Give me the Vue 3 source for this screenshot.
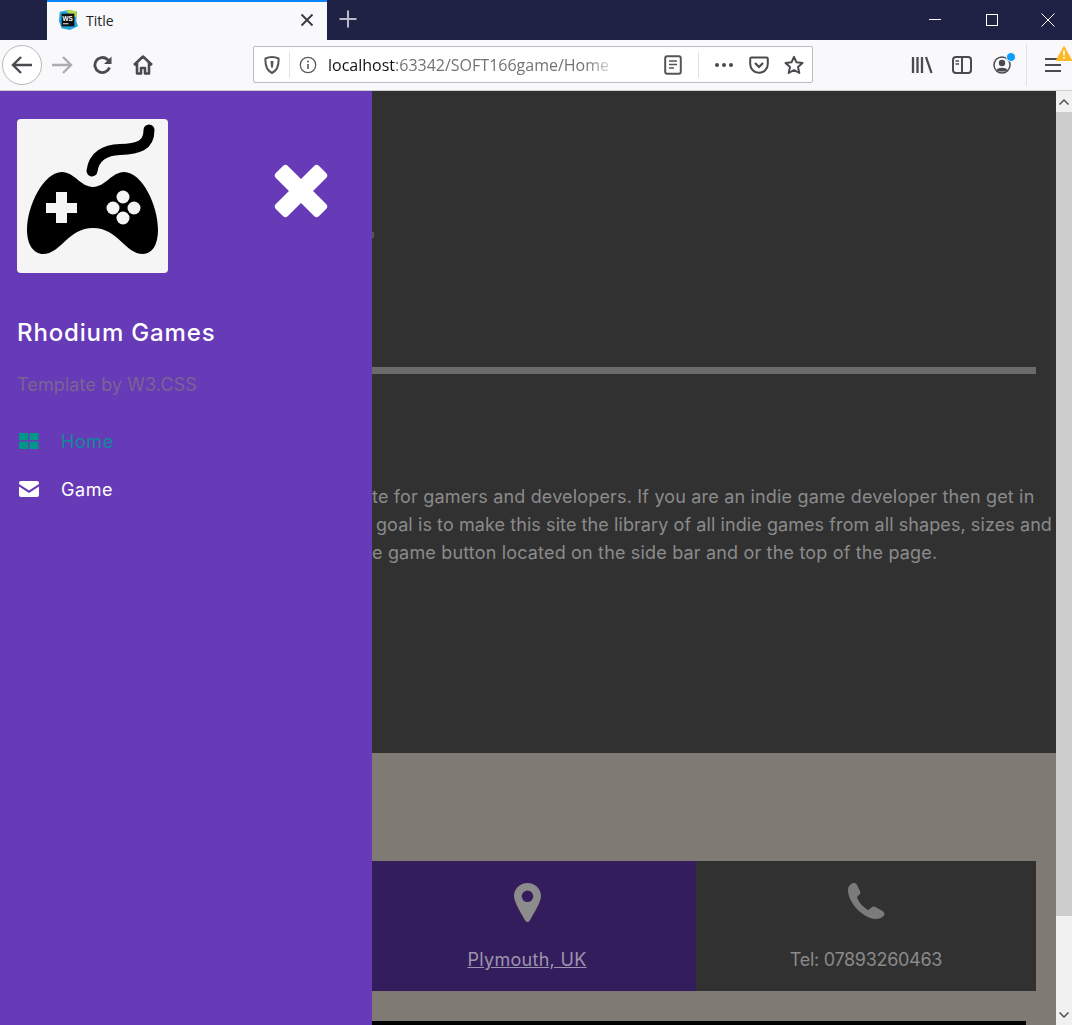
<script setup>
const lines = [
  { cls: "l1", text: "te for gamers and developers. If you are an indie game developer then get in" },
  { cls: "l2", text: "goal is to make this site the library of all indie games from all shapes, sizes and" },
  { cls: "l3", text: "e game button located on the side bar and or the top of the page." },
];
</script>

<template>
  <div class="window">
    <div class="tabbar">
      <div class="tab">
        <svg class="ws" width="20" height="20" viewBox="0 0 22 22">
          <path d="M2 2 L12 0 L21 2 L20 12 L22 18 L13 22 L4 20 L1 12 Z" fill="#1fa8e0" />
          <path d="M8 0 L20 1 L21 8 L14 6 Z" fill="#b6d94c" />
          <rect x="4" y="4" width="14" height="14" fill="#111" />
          <text x="5" y="12" class="ws-text">WS</text>
          <rect x="5.5" y="14.5" width="6" height="1.2" fill="#ddd" />
        </svg>
        <span class="tab-title">Title</span>
        <svg class="tab-close" width="14" height="14" viewBox="0 0 14 14">
          <path d="M1.5 1.5 L12.5 12.5 M12.5 1.5 L1.5 12.5" stroke="#3a3a3f" stroke-width="1.9" />
        </svg>
      </div>
      <svg class="newtab" width="18" height="18" viewBox="0 0 18 18">
        <path d="M9 0.5 V17.5 M0.5 9 H17.5" stroke="#b9bbc9" stroke-width="2" />
      </svg>
      <div class="winctrls">
        <svg width="14" height="14" viewBox="0 0 14 14"><path d="M1 6.500 H13" stroke="#fff" stroke-width="1" /></svg>
        <svg width="14" height="14" viewBox="0 0 14 14"><rect x="1.5" y="1.5" width="11" height="11" fill="none" stroke="#fff" stroke-width="1" /></svg>
        <svg width="14" height="14" viewBox="0 0 14 14"><path d="M0.5 0.5 L13.5 13.5 M13.5 0.5 L0.5 13.5" stroke="#fff" stroke-width="1" /></svg>
      </div>
    </div>

    <div class="toolbar">
      <div class="navbtn back">
        <svg width="22" height="20" viewBox="0 0 22 20"><path d="M21 10 H2 M10 2 L2 10 L10 18" fill="none" stroke="#4a4a4f" stroke-width="2.4" /></svg>
      </div>
      <div class="navbtn">
        <svg width="22" height="20" viewBox="0 0 22 20"><path d="M1 10 H20 M12 2 L20 10 L12 18" fill="none" stroke="#adadb0" stroke-width="2.4" /></svg>
      </div>
      <div class="navbtn reload">
        <svg width="20" height="20" viewBox="0 0 20 20"><path d="M16.5 12.5 A7.5 7.5 0 1 1 14.5 4.5 L17 7" fill="none" stroke="#4a4a4f" stroke-width="2.8" /><path d="M18.5 1.5 V9 H11 Z" fill="#4a4a4f" /></svg>
      </div>
      <div class="navbtn">
        <svg width="20" height="20" viewBox="0 0 20 20"><path d="M1 10 L10 1.5 L19 10 M4 8 V18.5 H8 V13 H12 V18.5 H16 V8" fill="none" stroke="#4a4a4f" stroke-width="2.6" stroke-linejoin="round" /></svg>
      </div>

      <div class="urlbar">
        <svg class="shield" width="16" height="18" viewBox="0 0 16 18"><path d="M8 1 C10 1 12.5 1.5 14.5 2.5 C15 9 13 14.5 8 17 C3 14.5 1 9 1.500 2.500 C3.500 1.500 6 1 8 1 Z" fill="none" stroke="#55555a" stroke-width="2" /><path d="M6.500 5 H9.500 L9 11.500 H7 Z" fill="#55555a" /></svg>
        <span class="urlsep first"></span>
        <svg class="info" width="18" height="18" viewBox="0 0 18 18"><circle cx="9" cy="9" r="7.700" fill="none" stroke="#5a5a5f" stroke-width="1.300" /><path d="M9 8 V13" stroke="#5a5a5f" stroke-width="1.600" /><circle cx="9" cy="5.500" r="1" fill="#5a5a5f" /></svg>
        <span class="urltext"><span class="host">localhost</span>:63342/SOFT166game/Home</span>
        <svg class="reader" width="18" height="20" viewBox="0 0 18 20"><rect x="1.200" y="1.200" width="15.600" height="17.600" rx="2" fill="none" stroke="#55555a" stroke-width="2" /><path d="M5 6 H13 M5 9.500 H13 M5 13 H10" stroke="#55555a" stroke-width="1.500" /></svg>
        <span class="urlsep second"></span>
        <svg class="dots" width="20" height="6" viewBox="0 0 20 6"><circle cx="3" cy="3" r="2" fill="#4a4a4f" /><circle cx="10" cy="3" r="2" fill="#4a4a4f" /><circle cx="17" cy="3" r="2" fill="#4a4a4f" /></svg>
        <svg class="pocket" width="20" height="18" viewBox="0 0 20 18"><path d="M2.500 1.500 H17.500 A1.300 1.300 0 0 1 18.800 2.800 V8 A8.800 8.800 0 0 1 1.200 8 V2.800 A1.300 1.300 0 0 1 2.500 1.500 Z" fill="none" stroke="#4a4a4f" stroke-width="2" /><path d="M6 7 L10 11 L14 7" fill="none" stroke="#4a4a4f" stroke-width="2.200" /></svg>
        <svg class="star" width="20" height="20" viewBox="0 0 20 20"><path d="M10 1.800 L12.500 7.300 L18.500 8 L14 12 L15.300 18 L10 15 L4.700 18 L6 12 L1.500 8 L7.500 7.300 Z" fill="none" stroke="#4a4a4f" stroke-width="2" stroke-linejoin="round" /></svg>
      </div>

      <div class="tools">
        <svg width="22" height="20" viewBox="0 0 22 20"><path d="M2 2 V18 M6.500 2 V18 M11 2 V18 M15 2 L20.500 18" stroke="#4a4a4f" stroke-width="2.300" /></svg>
        <svg width="20" height="18" viewBox="0 0 20 18"><rect x="1" y="1" width="18" height="16" rx="3" fill="none" stroke="#4a4a4f" stroke-width="2" /><rect x="9" y="1" width="2" height="16" fill="#4a4a4f" /><path d="M3.500 5 H7 M3.500 8 H7" stroke="#4a4a4f" stroke-width="1.500" /></svg>
        <div class="account">
          <svg width="18" height="18" viewBox="0 0 18 18"><circle cx="9" cy="9" r="8" fill="none" stroke="#4a4a4f" stroke-width="1.500" /><circle cx="9" cy="7" r="3.200" fill="#4a4a4f" /><path d="M3.500 14 C5 11 13 11 14.500 14 C12 16 6 16 3.500 14 Z" fill="#4a4a4f" /></svg>
          <span class="badge-dot"></span>
        </div>
      </div>
      <span class="toolsep"></span>
      <div class="menu">
        <span></span><span></span><span></span>
        <svg class="warn" width="16" height="15" viewBox="0 0 16 15"><path d="M8 0.500 L15.800 14.500 H0.200 Z" fill="#fdb827" stroke="#fdb827" stroke-linejoin="round" /><path d="M8 4.500 V9.500 M8 11 V12.800" stroke="#fff" stroke-width="1.600" /></svg>
      </div>
    </div>

    <div class="page">
      <aside class="sidebar">
        <div class="side-top">
          <div class="logo">
            <svg width="151" height="154" viewBox="17 119 151 154">
              <path d="M92 171 C94 156 105 150 120 149.500 C138 149 149 146 149 130" fill="none" stroke="#000" stroke-width="11" stroke-linecap="round" />
              <path d="M62 172 C74 172 81 187 93 187 C105 187 112 172 124 172 C142 172 158 205 158 230 C158 245 152 254 143 254 C125 254 118 228 93 228 C68 228 61 254 43 254 C34 254 27 245 27 230 C27 205 44 172 62 172 Z" fill="#000" />
              <path d="M56 192 H67 V203 H77 V213 H67 V223 H56 V213 H46 V203 H56 Z" fill="#f6f5f6" />
              <circle cx="123" cy="197" r="6.500" fill="#f6f5f6" />
              <circle cx="123" cy="218" r="6.500" fill="#f6f5f6" />
              <circle cx="113" cy="208" r="6.500" fill="#f6f5f6" />
              <circle cx="134" cy="208" r="6.500" fill="#f6f5f6" />
            </svg>
          </div>
          <svg class="close" width="56" height="56" viewBox="0 0 56 56">
            <rect x="-2.500" y="19.500" width="61" height="17" rx="3.500" fill="#fff" transform="rotate(45 28 28)" />
            <rect x="-2.500" y="19.500" width="61" height="17" rx="3.500" fill="#fff" transform="rotate(-45 28 28)" />
          </svg>
        </div>
        <h4 class="brand">Rhodium Games</h4>
        <p class="byline">Template by W3.CSS</p>
        <nav class="sidenav">
          <a class="navlink active">
            <svg width="20" height="16" viewBox="0 0 20 16"><path d="M0 0 H9 V7 H0 Z M10.500 0 H19.500 V7 H10.500 Z M0 8.500 H9 V16 H0 Z M10.500 8.500 H19.500 V16 H10.500 Z" fill="#009688" /></svg>
            <span>Home</span>
          </a>
          <a class="navlink">
            <svg width="20" height="16" viewBox="0 0 20 16"><path d="M2 0 H18 A2 2 0 0 1 20 2 V3 L10 9.500 L0 3 V2 A2 2 0 0 1 2 0 Z M0 5.500 L10 12 L20 5.500 V14 A2 2 0 0 1 18 16 H2 A2 2 0 0 1 0 14 Z" fill="#fff" /></svg>
            <span>Game</span>
          </a>
        </nav>
      </aside>

      <main class="content">
        <section class="dark">
          <span class="clip-mark"></span>
          <div class="rule"></div>
          <div class="about">
            <div v-for="line in lines" :key="line.cls" class="about-line" :class="line.cls">{{ line.text }}</div>
          </div>
        </section>
        <section class="contact">
          <div class="cards">
            <div class="card purple">
              <svg width="27" height="39" viewBox="0 0 27 39"><path fill-rule="evenodd" d="M13.500 0 C21 0 27 5.800 27 13 C27 19 20 30 15.500 38 C14.500 39.300 12.500 39.300 11.500 38 C7 30 0 19 0 13 C0 5.800 6 0 13.500 0 Z M13.500 7.500 A5.800 5.800 0 1 0 13.500 19.100 A5.800 5.800 0 1 0 13.500 7.500 Z" fill="#8c8c8c" />
              </svg>
              <a class="place">Plymouth, UK</a>
            </div>
            <div class="card slate">
              <svg width="37" height="36" viewBox="0 0 37 36"><path d="M4 0.500 C6 -0.500 8 0 9 2 L12 8 C12.800 9.800 12.300 11 11 12 L9 14 C10.500 19 15 24.500 20.500 27 L23.500 24.500 C25 23.300 26.500 23.300 28 24.200 L34.500 28 C36.500 29.300 37 31 36 32.500 C34 35 31 36 27.500 36 C14 35 0 19 0 7 C0 4 1.500 1.800 4 0.500 Z" fill="#7b7b7b" /></svg>
              <span class="tel">Tel: 07893260463</span>
            </div>
          </div>
          <div class="blackbar"></div>
        </section>
      </main>

      <div class="scrollbar">
        <div class="sb-arrow">
          <svg width="10" height="6" viewBox="0 0 10 6"><path d="M0.500 5.500 L5 1 L9.500 5.500" fill="none" stroke="#505050" stroke-width="1.500" /></svg>
        </div>
        <div class="sb-thumb"></div>
        <div class="sb-track"></div>
        <div class="sb-arrow low">
          <svg width="10" height="6" viewBox="0 0 10 6"><path d="M0.500 0.500 L5 5 L9.500 0.500" fill="none" stroke="#505050" stroke-width="1.500" /></svg>
        </div>
      </div>
    </div>
  </div>
</template>

<style>
html, body {
  margin: 0;
  overflow: hidden;
}
</style>

<style scoped>
.window {
  width: 1072px;
  height: 1025px;
  overflow: hidden;
  display: flex;
  flex-direction: column;
  font-family: "Inter", "Open Sans", sans-serif;
}

.tabbar {
  height: 40px;
  flex: none;
  background: #1f2244;
  display: flex;
  align-items: stretch;
  padding-left: 47px;
}
.tab {
  width: 280px;
  background: #f9f9fb;
  border-top: 2px solid #0a84ff;
  box-sizing: border-box;
  display: flex;
  align-items: center;
  padding: 0 13px 2px 11px;
  font-family: "Open Sans", sans-serif;
  font-size: 14px;
  color: #222;
}
.ws { flex: none; }
.ws-text {
  font-family: "Liberation Sans", sans-serif;
  font-size: 7px;
  font-weight: 700;
  fill: #fff;
}
.tab-title { margin-left: 8px; flex: 1; }
.newtab { margin: 10px 0 0 12px; }
.winctrls {
  margin-left: auto;
  width: 168px;
  display: flex;
  justify-content: space-between;
  align-items: center;
  padding: 0 17px 0 24px;
  box-sizing: border-box;
}

.toolbar {
  height: 51px;
  flex: none;
  box-sizing: border-box;
  background: #f9f9fb;
  border-bottom: 1px solid #cfcfd3;
  display: flex;
  align-items: center;
  padding: 0 0 1px 2px;
}
.navbtn {
  width: 40px;
  height: 40px;
  flex: none;
  display: flex;
  align-items: center;
  justify-content: center;
  box-sizing: border-box;
}
.navbtn.reload { margin-left: 1px; }
.navbtn.back {
  border: 1px solid #b8b8bc;
  border-radius: 50%;
  background: #fff;
}
.urlbar {
  margin-left: 90px;
  width: 560px;
  height: 37px;
  flex: none;
  box-sizing: border-box;
  border: 1px solid #bcbcc0;
  border-radius: 2px;
  background: #fff;
  display: flex;
  align-items: center;
  padding-left: 10px;
}
.urlsep {
  width: 1px;
  height: 26px;
  background: #e2e2e4;
  flex: none;
}
.urlsep.first { margin-left: 9px; }
.urlsep.second { margin-left: 16px; }
.info { margin-left: 9px; }
.urltext {
  margin-left: 11px;
  width: 292px;
  flex: none;
  white-space: nowrap;
  overflow: hidden;
  font-family: "Open Sans", sans-serif;
  font-size: 16px;
  color: #737373;
  -webkit-mask-image: linear-gradient(to right, #000 88%, transparent 100%);
  mask-image: linear-gradient(to right, #000 88%, transparent 100%);
}
.host { color: #111; }
.reader { margin-left: 44px; }
.dots { margin-left: 15px; }
.pocket { margin-left: 15px; }
.star { margin-left: 15px; }

.tools {
  margin-left: 98px;
  display: flex;
  align-items: center;
  gap: 19px;
}
.account { position: relative; display: flex; margin-left: 2px; }
.badge-dot {
  position: absolute;
  top: -4px;
  right: -5px;
  width: 8px;
  height: 8px;
  border-radius: 50%;
  background: #0a9dff;
  border: 1px solid #f9f9fb;
}
.toolsep {
  width: 1px;
  height: 42px;
  background: #e0e0e3;
  margin-left: 15px;
}
.menu {
  position: relative;
  margin-left: 18px;
  width: 16px;
  display: flex;
  flex-direction: column;
  gap: 4px;
}
.menu span {
  height: 2px;
  background: #4a4a4f;
}
.warn {
  position: absolute;
  top: -12px;
  left: 11px;
}

.page {
  flex: 1;
  min-height: 0;
  display: flex;
}

.sidebar {
  width: 372px;
  flex: none;
  background: #673ab7;
  box-sizing: border-box;
  padding: 28px 0 0 17px;
  color: #fff;
}
.side-top {
  display: flex;
  align-items: flex-start;
}
.logo {
  width: 151px;
  height: 154px;
  background: #f6f5f6;
  border-radius: 4px;
  flex: none;
  display: flex;
}
.close {
  margin: 44px 0 0 105px;
}
.brand {
  margin: 45px 0 0;
  font-size: 24px;
  line-height: 30px;
  font-weight: 500;
  letter-spacing: 0.85px;
}
.byline {
  margin: 24px 0 0;
  font-size: 18px;
  line-height: 26px;
  color: #7a6494;
  letter-spacing: 0.1px;
}
.sidenav {
  margin-top: 29px;
  display: flex;
  flex-direction: column;
  gap: 20px;
}
.navlink {
  display: flex;
  align-items: center;
  height: 28px;
  padding-left: 2px;
  font-size: 18px;
  color: #fff;
}
.navlink span { margin-left: 22px; letter-spacing: 0.6px; }
.navlink.active { color: #0f8a9a; }

.content {
  flex: 1;
  min-width: 0;
  display: flex;
  flex-direction: column;
  overflow: hidden;
}
.dark {
  height: 662px;
  flex: none;
  background: #313131;
  display: flex;
  flex-direction: column;
  padding-top: 141px;
  box-sizing: border-box;
}
.clip-mark {
  width: 2px;
  height: 6px;
  background: #555;
  flex: none;
}
.rule {
  margin-top: 129px;
  width: 664px;
  height: 7px;
  background: #6b6b6b;
  flex: none;
}
.about {
  margin-top: 109px;
  color: #8b8b8b;
  font-size: 18px;
  line-height: 28px;
  white-space: nowrap;
  letter-spacing: 0.17px;
}
.l2 { padding-left: 4px; letter-spacing: 0.08px; }

.contact {
  flex: 1;
  background: #7f7b74;
  padding-top: 108px;
}
.cards {
  display: flex;
  width: 664px;
  height: 130px;
}
.card {
  display: flex;
  flex-direction: column;
  align-items: center;
  padding-top: 22px;
  box-sizing: border-box;
  font-size: 18px;
  color: #8a8a8a;
}
.card.purple { width: 324px; background: #331d5c; padding-right: 14px; }
.card.slate { width: 340px; background: #313131; }
.place {
  margin-top: 24px;
  line-height: 28px;
  color: #9c94ad;
  text-decoration: underline;
  letter-spacing: 0.3px;
}
.tel {
  margin-top: 27px;
  line-height: 28px;
  letter-spacing: -0.3px;
}
.blackbar {
  margin-top: 30px;
  width: 654px;
  height: 8px;
  background: #000;
}

.scrollbar {
  width: 16px;
  flex: none;
  background: #f1f1f1;
  display: flex;
  flex-direction: column;
}
.sb-arrow {
  height: 21px;
  flex: none;
  display: flex;
  align-items: center;
  justify-content: center;
}
.sb-thumb {
  height: 804px;
  flex: none;
  background: #cdcdcd;
}
.sb-track { flex: 1; }
</style>
